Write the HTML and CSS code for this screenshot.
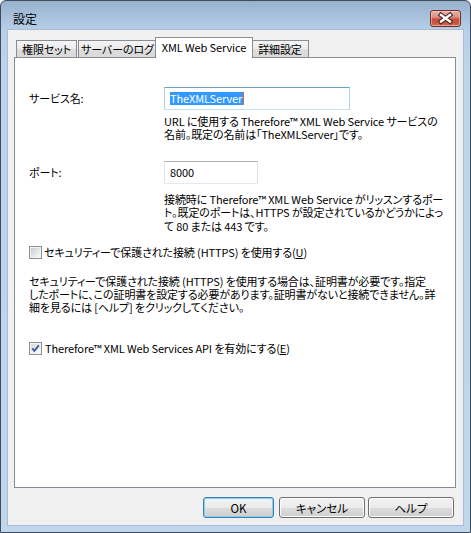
FILE: index.html
```
<!DOCTYPE html>
<html lang="ja">
<head>
<meta charset="utf-8">
<title>設定</title>
<link rel="stylesheet" href="styles.css">
</head>
<body>
<div class="window">
  <div class="titlebar">
    <span class="title">設定</span>
    <button class="close" aria-label="閉じる">
      <svg width="31" height="17" viewBox="0 0 31 17">
        <path d="M11 5 L20 11.5 M20 5 L11 11.5" stroke="#4a2320" stroke-width="4.6" stroke-linecap="square" fill="none"/>
        <path d="M11 5 L20 11.5 M20 5 L11 11.5" stroke="#ffffff" stroke-width="2.4" stroke-linecap="square" fill="none"/>
      </svg>
    </button>
  </div>
  <div class="client">
    <div class="tabs">
      <div class="tab t1">権限セット</div>
      <div class="tab t2">サーバーのログ</div>
      <div class="tab t3 active">XML Web Service</div>
      <div class="tab t4">詳細設定</div>
    </div>
    <div class="panel">
      <div class="field r-name">
        <span class="lbl">サービス名:</span>
        <div class="input focused"><span class="sel">TheXMLServer</span><span class="caret"></span></div>
      </div>
      <p class="help h1">URL に使用する Therefore™ XML Web Service サービスの<br>名前。既定の名前は「TheXMLServer」です。</p>
      <div class="field r-port">
        <span class="lbl">ポート:</span>
        <div class="input port">8000</div>
      </div>
      <p class="help h2">接続時に Therefore™ XML Web Service がリッスンするポー<br>ト。既定のポートは、HTTPS が設定されているかどうかによっ<br>て 80 または 443 です。</p>
      <div class="check c1"><span class="box"></span><span class="ctext">セキュリティーで保護された接続 (HTTPS) を使用する(<u>U</u>)</span></div>
      <p class="para">セキュリティーで保護された接続 (HTTPS) を使用する場合は、証明書が必要です。指定<br>したポートに、この証明書を設定する必要があります。証明書がないと接続できません。詳<br>細を見るには [ヘルプ] をクリックしてください。</p>
      <div class="check c2"><span class="box"><svg width="9" height="9" viewBox="0 0 9 9"><path d="M1.2 4.4 L3.4 6.8 L7.8 1.4" stroke="#3f5a9c" stroke-width="1.9" fill="none"/></svg></span><span class="ctext">Therefore™ XML Web Services API を有効にする(<u>E</u>)</span></div>
    </div>
    <div class="buttons">
      <button class="btn ok">OK</button>
      <button class="btn cancel">キャンセル</button>
      <button class="btn helpbtn">ヘルプ</button>
    </div>
  </div>
</div>
</body>
</html>
```
FILE: styles.css
```
html, body {
  margin: 0;
  padding: 0;
}
body {
  font-family: "Noto Sans CJK JP", "Noto Sans", sans-serif;
  font-size: 11px;
  font-feature-settings: "palt";
  letter-spacing: -0.12px;
  color: #000;
}
.window {
  width: 471px;
  height: 533px;
  box-sizing: border-box;
  border: 1px solid #404c5c;
  border-radius: 6px 6px 0 0;
  background: linear-gradient(to bottom, #97b0cc 0px, #a8c0db 14px, #b8cfe8 29px, #bcd3ea 60px, #bfd6ec 100%);
  padding: 0 7px 7px 7px;
  display: flex;
  flex-direction: column;
}
.titlebar {
  height: 29px;
  display: flex;
  align-items: flex-start;
}
.title {
  padding-top: 10px;
  padding-left: 5px;
  line-height: 15px;
  font-size: 12px;
}
.close {
  margin: 9px 2px 0 auto;
  width: 31px;
  height: 17px;
  padding: 0;
  box-sizing: border-box;
  border: 1px solid #6e2f28;
  border-radius: 3px;
  background: linear-gradient(to bottom, #e9b0a5 0%, #dc9082 40%, #c5503f 55%, #c8543f 80%, #d5735e 100%);
  box-shadow: inset 0 0 0 1px rgba(255, 230, 225, 0.45);
  display: flex;
  align-items: center;
  justify-content: center;
  overflow: hidden;
}
.close svg {
  display: block;
  margin: -1px;
}
.client {
  flex: 1;
  background: #f0f0f0;
  box-shadow: 0 0 0 1px #a7bdd6;
  padding: 7px 9px 7px 6px;
  display: flex;
  flex-direction: column;
}
.tabs {
  height: 20px;
  display: flex;
  align-items: flex-end;
  padding-left: 2px;
}
.tab {
  box-sizing: border-box;
  height: 17px;
  border: 1px solid #898c95;
  border-bottom: none;
  background: linear-gradient(to bottom, #f4f4f4 0%, #ebebeb 50%, #dedede 51%, #d9d9d9 100%);
  display: flex;
  align-items: center;
  justify-content: center;
  line-height: 14px;
  white-space: nowrap;
  font-size: 11px;
}
.t1 { width: 61px; }
.t2 { width: 79px; margin-left: 1px; }
.t3 { width: 98px; margin-left: -2px; }
.t4 { width: 58px; margin-left: -2px; }
.tab.active {
  height: 21px;
  margin-bottom: -1px;
  background: #fff;
  position: relative;
  z-index: 2;
  padding-bottom: 2px;
}
.panel {
  width: 442px;
  height: 431px;
  box-sizing: border-box;
  border: 1px solid #898c95;
  background: #fff;
  padding-left: 14px;
  display: flex;
  flex-direction: column;
}
.field {
  display: grid;
  grid-template-columns: 135px auto;
  align-items: center;
}
.r-name { margin-top: 29px; }
.r-port { margin-top: 19px; }
.lbl {
  line-height: 15px;
}
.input {
  box-sizing: border-box;
  height: 23px;
  border: 1px solid;
  border-color: #abadb3 #dbdfe6 #e3e9ef #e2e3ea;
  background: #fff;
  padding-left: 5px;
  display: flex;
  align-items: center;
  line-height: 13px;
}
.input.focused {
  width: 186px;
  border-color: #6c9fca #b5d1e8 #c7e0f0 #b5d1e8;
}
.input.port {
  width: 94px;
}
.sel {
  background: #3399ff;
  color: #fff;
  line-height: 13px;
  padding-right: 1px;
}
.caret {
  display: inline-block;
  width: 1px;
  height: 13px;
  background: #c86a2a;
}
.help, .para {
  margin: 0;
  line-height: 13.33px;
  white-space: nowrap;
}
.help {
  margin-left: 135px;
}
.h1 { margin-top: 5px; }
.h2 { margin-top: 9.5px; }
.check {
  display: flex;
  align-items: center;
  height: 15px;
  line-height: 15px;
  white-space: nowrap;
}
.c1 { margin-top: 11.5px; }
.para { margin-top: 15px; }
.c2 { margin-top: 26px; }
.box {
  width: 13px;
  height: 13px;
  box-sizing: border-box;
  border: 1px solid #8f8f8f;
  padding: 1px;
  background: linear-gradient(135deg, #c6cad0 0%, #e4e6e9 55%, #f8f8f8 100%) content-box, #f4f4f4;
  margin-right: 2px;
  display: flex;
  align-items: center;
  justify-content: center;
}
.c2 .box {
  background: linear-gradient(135deg, #d6d9de 0%, #eceef0 55%, #fafafa 100%) content-box, #f4f4f4;
  margin-right: 3px;
}
.box svg {
  display: block;
}
u {
  text-decoration: underline;
  text-underline-offset: 1px;
}
.buttons {
  margin-top: 9px;
  height: 21px;
  display: flex;
  justify-content: flex-end;
}
.btn {
  box-sizing: border-box;
  height: 21px;
  padding: 0;
  font-family: inherit;
  font-size: 11.5px;
  font-feature-settings: "palt";
  line-height: 14px;
  color: #000;
  border: 1px solid #707070;
  border-radius: 3px;
  background: linear-gradient(to bottom, #f2f2f2 0%, #ebebeb 50%, #dddddd 51%, #cfcfcf 100%);
  box-shadow: inset 0 0 0 1px #fbfbfb;
}
.ok {
  width: 71px;
  margin-right: 5px;
  border-color: #3c7fb1;
  box-shadow: inset 0 0 0 1px #7fd3f5;
}
.cancel {
  width: 86px;
  margin-right: 3px;
}
.helpbtn {
  width: 86px;
}
```
